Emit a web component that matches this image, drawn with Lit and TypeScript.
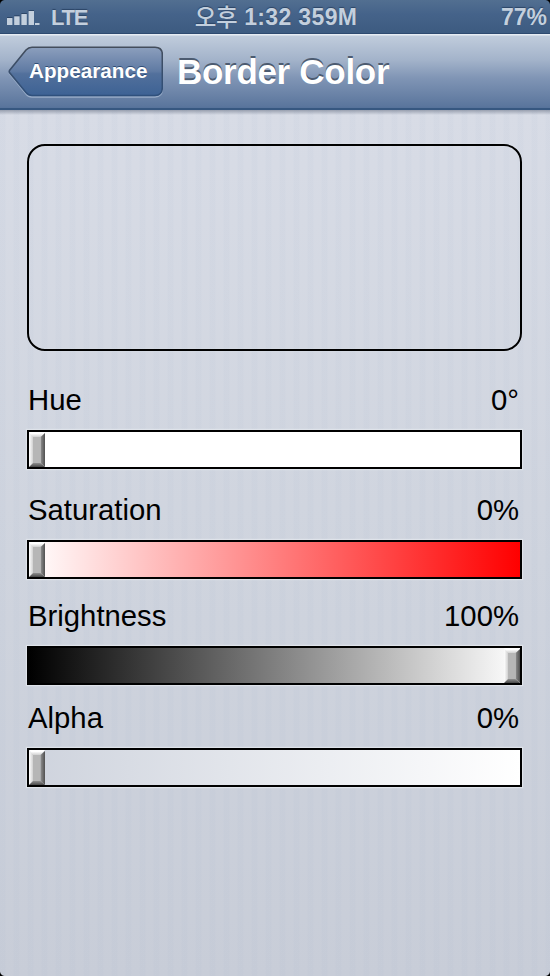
import { LitElement, html, css, svg } from "lit";
import { customElement, property } from "lit/decorators.js";
import { classMap } from "lit/directives/class-map.js";

@customElement("status-bar")
class StatusBar extends LitElement {
  static styles = css`
    :host {
      display: flex;
      box-sizing: border-box;
      height: 34px;
      padding: 0 3px 0 6px;
      background: linear-gradient(#526f91 0, #45638a 14px, #3d5b80 33px, #2e4a70 33px);
      color: #c3cfdd;
      font: bold 23px/35px "Liberation Sans", "Noto Sans CJK KR", sans-serif;
      text-shadow: 0 -1px 1px #2c4566;
      white-space: nowrap;
    }
    .left { display: flex; flex: 1 1 0; gap: 11px; }
    .signal { display: block; width: 34px; height: 34px; }
    .lte { font-size: 22px; letter-spacing: -1.2px; }
    .time { flex: none; display: flex; gap: 7px; margin-right: 1px; }
    .clock { letter-spacing: 0.35px; }
    .ampm { font-family: "Noto Sans CJK KR", sans-serif; font-size: 23.5px; font-weight: 500; line-height: 32px; letter-spacing: -0.4px; }
    .right { flex: 1 1 0; text-align: right; }
  `;

  render() {
    const bars = [[0, 18], [7.2, 16.3], [14.4, 14], [21.6, 11]];
    return html`
      <div class="left">
        <svg class="signal" viewBox="0 0 34 34">
          ${bars.map(([x, y]) => svg`<rect x=${x + 1} y=${y - 1} width="5.4" height="2" fill="#2c4566"></rect>
            <rect x=${x + 1} y=${y} width="5.4" height=${25 - y} fill="#c3cfdd"></rect>`)}
          <rect x="29" y="23" width="4.5" height="2" fill="#c3cfdd"></rect>
        </svg>
        <span class="lte">LTE</span>
      </div>
      <div class="time"><span class="ampm">오후</span><span class="clock">1:32 359M</span></div>
      <div class="right">77%</div>
    `;
  }
}

@customElement("nav-bar")
class NavBar extends LitElement {
  static styles = css`
    :host {
      display: flex;
      box-sizing: border-box;
      height: 76px;
      padding: 12px 0 0 8px;
      gap: 14px;
      background: linear-gradient(#e6ecf3 0, #e6ecf3 1px, #c0ccdc 2px, #a3b3ca 26px, #8095b5 44px, #5b769d 72px, #56729a 74px, #365780 74px);
      font-family: "Liberation Sans", sans-serif;
      font-weight: bold;
      color: #fff;
      white-space: nowrap;
    }
    .back { display: grid; flex: none; width: 155px; height: 52px; }
    .shape, .label { grid-area: 1 / 1; }
    .shape { width: 155px; height: 52px; display: block; }
    .label { padding-left: 21px; font-size: 20.7px; line-height: 50px; text-shadow: 0 -1.5px 0 #2f4d76; }
    .title { font-size: 35px; letter-spacing: -0.3px; line-height: 52px; text-shadow: 0 -2px 0 #4c5b70; }
  `;

  render() {
    const outline = "M24 1.2 H147 Q154.3 1.2 154.3 8.5 V41.5 Q154.3 49.5 147 49.5 H24 Q20.5 49.5 18 46.5 L1.5 26.5 Q1 25.5 1.5 24.5 L18 4 Q20.5 1.2 24 1.2 Z";
    return html`
      <div class="back">
        <svg class="shape" viewBox="0 0 155 52">
          <defs>
            <linearGradient id="fill" x1="0" y1="0" x2="0" y2="1">
              <stop offset="0" stop-color="#8c9fbd"></stop>
              <stop offset="0.5" stop-color="#5f7aa3"></stop>
              <stop offset="0.55" stop-color="#52709c"></stop>
              <stop offset="1" stop-color="#3d6294"></stop>
            </linearGradient>
            <linearGradient id="edge" x1="0" y1="0" x2="0" y2="1">
              <stop offset="0" stop-color="#434d5c"></stop>
              <stop offset="1" stop-color="#2f507c"></stop>
            </linearGradient>
          </defs>
          <path d=${outline} transform="translate(0 1.5)" fill="none" stroke="#9aadc8" stroke-width="1.3"></path>
          <path d=${outline} fill="url(#fill)" stroke="url(#edge)" stroke-width="1.6"></path>
        </svg>
        <span class="label">Appearance</span>
      </div>
      <div class="title">Border Color</div>
    `;
  }
}

@customElement("color-slider")
class ColorSlider extends LitElement {
  @property() label = "";
  @property() value = "";
  @property() kind = "hue";
  @property({ type: Boolean }) end = false;

  static styles = css`
    :host {
      display: block;
      font: 29.3px/34px "Liberation Sans", sans-serif;
      color: #000;
    }
    .row { display: flex; justify-content: space-between; padding: 0 3px 0 1px; height: 47px; }
    .track {
      display: flex;
      box-sizing: border-box;
      height: 39px;
      border: 2px solid #000;
      box-shadow: 0 0 1px 1px #dfe3ea;
    }
    .hue { background: #fff; }
    .saturation { background: linear-gradient(90deg, #fff, #f00); }
    .brightness { background: linear-gradient(90deg, #000, #fff); }
    .alpha { background: linear-gradient(90deg, #ced3dd, #fff); }
    .end { justify-content: flex-end; }
    .thumb { display: block; width: 16px; height: 35px; }
  `;

  render() {
    return html`
      <div class="row"><span>${this.label}</span><span>${this.value}</span></div>
      <div class=${classMap({ track: true, [this.kind]: true, end: this.end })}>
        <svg class="thumb" viewBox="0 0 16 35">
          <defs>
            <linearGradient id="l"><stop offset="0" stop-color="#fff"></stop><stop offset="1" stop-color="#d0d0d0"></stop></linearGradient>
            <linearGradient id="r"><stop offset="0" stop-color="#8f8f8f"></stop><stop offset="1" stop-color="#505050"></stop></linearGradient>
            <linearGradient id="t" x1="0" y1="0" x2="0" y2="1"><stop offset="0.3" stop-color="#fff"></stop><stop offset="1" stop-color="#d0d0d0"></stop></linearGradient>
            <linearGradient id="b" x1="0" y1="0" x2="0" y2="1"><stop offset="0" stop-color="#8f8f8f"></stop><stop offset="1" stop-color="#484848"></stop></linearGradient>
          </defs>
          <rect x="3.500" y="4" width="8" height="27.500" fill="#b6b6b6"></rect>
          <path d="M0 0 L4 4.500 V31 L0 35 Z" fill="url(#l)"></path>
          <path d="M0 0 H16 L11.500 5 H4 Z" fill="url(#t)"></path>
          <path d="M16 1 V35 L11.500 31 V5 Z" fill="url(#r)"></path>
          <path d="M0 35 L4 31 H11.500 L16 35 Z" fill="url(#b)"></path>
        </svg>
      </div>
    `;
  }
}

@customElement("app-root")
class AppRoot extends LitElement {
  static styles = css`
    :host {
      display: flex;
      flex-direction: column;
      position: relative;
      height: 976px;
      overflow: hidden;
      background:
        repeating-linear-gradient(90deg, rgba(150, 170, 200, 0.05) 0 5px, transparent 6px 13px, rgba(150, 170, 200, 0.05) 14px),
        linear-gradient(#d8dce6 110px, #cfd4de 560px, #c8cdd8 976px);
    }
    .shade { height: 5px; background: linear-gradient(rgba(90, 100, 120, 0.5), transparent); }
    .content { display: flex; flex-direction: column; padding: 29px 28px 0 27px; }
    .preview {
      box-sizing: border-box;
      height: 207px;
      border: 2px solid #000;
      border-radius: 18px;
      box-shadow: 0 0 1px #eceff4, inset 0 0 1px #eceff4;
      margin-bottom: 32px;
    }
    .gap-l { margin-bottom: 24px; }
    .gap-m { margin-bottom: 20px; }
    .gap-s { margin-bottom: 16px; }
    .corner { position: absolute; width: 5px; height: 5px; }
    .tl { top: 0; left: 0; background: radial-gradient(circle at 5px 5px, transparent 4.5px, #000 5.5px); }
    .tr { top: 0; right: 0; background: radial-gradient(circle at 0 5px, transparent 4.5px, #000 5.5px); }
    .bl { bottom: 0; left: 0; background: radial-gradient(circle at 5px 0, transparent 4.5px, #000 5.5px); }
    .br { bottom: 0; right: 0; background: radial-gradient(circle at 0 0, transparent 4.5px, #000 5.5px); }
  `;

  render() {
    return html`
      <status-bar></status-bar>
      <nav-bar></nav-bar>
      <div class="shade"></div>
      <div class="content">
        <div class="preview"></div>
        <color-slider class="gap-l" label="Hue" value="0°" kind="hue"></color-slider>
        <color-slider class="gap-m" label="Saturation" value="0%" kind="saturation"></color-slider>
        <color-slider class="gap-s" label="Brightness" value="100%" kind="brightness" end></color-slider>
        <color-slider label="Alpha" value="0%" kind="alpha"></color-slider>
      </div>
      <div class="corner tl"></div>
      <div class="corner tr"></div>
      <div class="corner bl"></div>
      <div class="corner br"></div>
    `;
  }
}
